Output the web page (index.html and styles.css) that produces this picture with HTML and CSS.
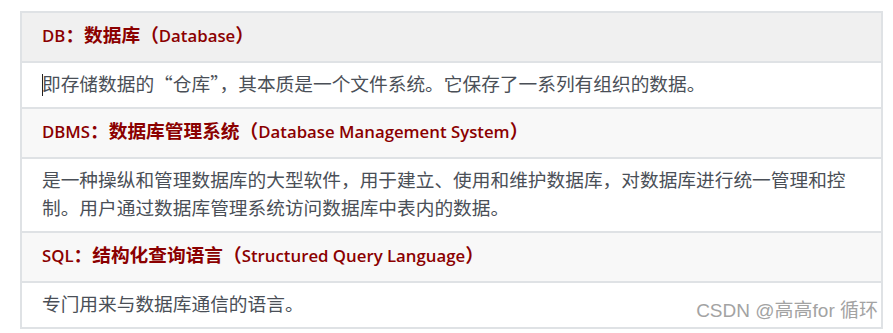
FILE: index.html
```html
<!DOCTYPE html>
<html lang="zh-CN">
<head>
<meta charset="utf-8">
<title>数据库概念</title>
<link rel="stylesheet" href="styles.css">
</head>
<body>
<div class="page">
  <table class="terms">
    <thead>
      <tr><th><span class="lat">DB</span>：<strong>数据库</strong>（<span class="lat">Database</span>）</th></tr>
    </thead>
    <tbody>
      <tr><td><span class="caret"></span>即存储数据的“仓库”，其本质是一个文件系统。它保存了一系列有组织的数据。</td></tr>
      <tr class="head"><td><span class="lat">DBMS</span>：<strong>数据库管理系统</strong>（<span class="lat">Database Management System</span>）</td></tr>
      <tr><td>是一种操纵和管理数据库的大型软件，用于建立、使用和维护数据库，对数据库进行统一管理和控制。用户通过数据库管理系统访问数据库中表内的数据。</td></tr>
      <tr class="head"><td><span class="lat">SQL</span>：<strong>结构化查询语言</strong>（<span class="lat">Structured Query Language</span>）</td></tr>
      <tr><td>专门用来与数据库通信的语言。</td></tr>
    </tbody>
  </table>
  <div class="watermark">CSDN @高高for 循环</div>
</div>
</body>
</html>
```
FILE: styles.css
```css
html, body {
  margin: 0;
  padding: 0;
  background: #ffffff;
}

.page {
  position: relative;
  padding: 11px 10px 0 20px;
  width: 863px;
}

.terms {
  width: 863px;
  border-collapse: collapse;
  font-family: "Noto Sans CJK SC", sans-serif;
  font-size: 18.7px;
  color: #4a4f57;
}

.terms th,
.terms td {
  border: 2px solid #dfe2e5;
  text-align: left;
  padding: 6px 20px 10px 20px;
  line-height: 28px;
  font-weight: 400;
}

.terms th {
  background: #f0f0f0;
}

.terms .head td {
  background: #f8f8f8;
}

.terms th,
.terms .head td {
  color: #8b0000;
  font-weight: 600;
  padding-top: 7px;
  padding-bottom: 11px;
}

.terms strong {
  font-weight: 700;
}

.lat {
  font-family: "Open Sans", sans-serif;
  font-size: 16.8px;
  font-weight: 600;
}

.caret {
  display: inline-block;
  width: 1px;
  height: 22px;
  margin-right: -1px;
  vertical-align: -5px;
  background: #222222;
}

.watermark {
  position: absolute;
  right: 15px;
  bottom: 7px;
  font-family: "Liberation Sans", Arial, "Noto Sans CJK SC", sans-serif;
  font-size: 19px;
  color: #a3a3a3;
}
```
